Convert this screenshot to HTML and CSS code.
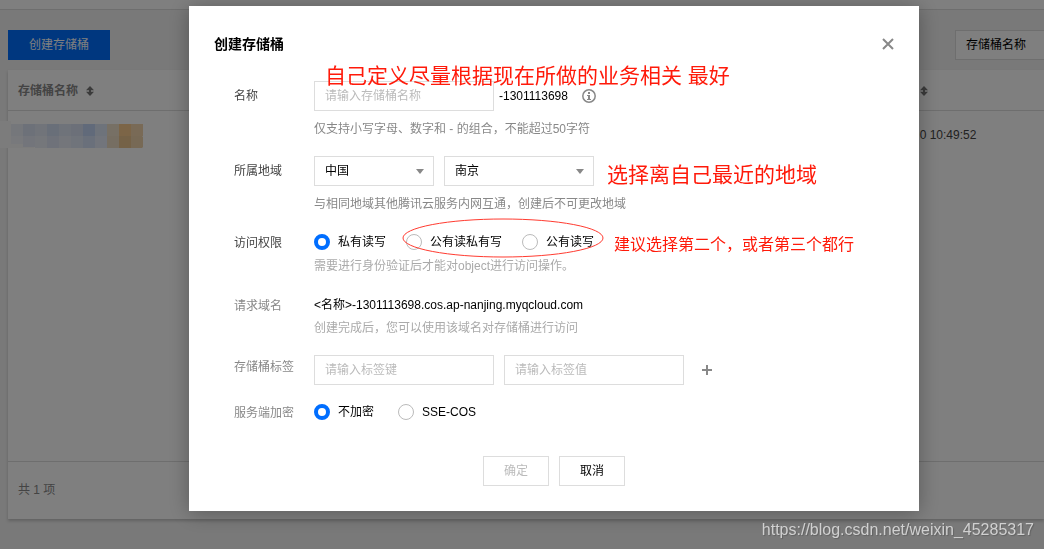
FILE: index.html
```html
<!DOCTYPE html>
<html lang="zh-CN">
<head>
<meta charset="utf-8">
<title>创建存储桶</title>
<link rel="stylesheet" href="styles.css">
</head>
<body>
<div class="page">
  <header class="topbar"></header>
  <main class="content">
    <div class="toolbar">
      <button class="btn btn-primary" type="button">创建存储桶</button>
      <button class="search-type" type="button">存储桶名称</button>
    </div>
    <section class="panel">
      <table class="buckets">
        <thead>
          <tr>
            <th class="col-name">存储桶名称
              <svg class="sort" viewBox="0 0 8 10" aria-hidden="true"><path d="M4 0 8 4.3H5V5.7H8L4 10 0 5.7H3V4.3H0Z"/></svg>
            </th>
            <th><svg class="sort" viewBox="0 0 8 10" aria-hidden="true"><path d="M4 0 8 4.3H5V5.7H8L4 10 0 5.7H3V4.3H0Z"/></svg></th>
          </tr>
        </thead>
        <tbody>
          <tr>
            <td class="col-name">
              <svg class="mosaic" viewBox="0 0 143 28" aria-hidden="true">
                <path d="M0 0H11V23H34V27H0Z" fill="#f8f8f8"/>
                <g>
                  <path d="M11 3H23V15H11Z" fill="#eaeef7"/><path d="M23 3H35V15H23Z" fill="#dbe3f2"/><path d="M35 3H47V15H35Z" fill="#e2e8f5"/><path d="M47 3H59V15H47Z" fill="#d2def3"/><path d="M59 3H71V15H59Z" fill="#dee6f5"/><path d="M71 3H83V15H71Z" fill="#d8e1f3"/><path d="M83 3H95V15H83Z" fill="#c2d4f5"/><path d="M95 3H107V15H95Z" fill="#dce6f7"/><path d="M107 3H119V15H107Z" fill="#efe0cb"/><path d="M119 3H131V15H119Z" fill="#f8ca8e"/><path d="M131 3H143V15H131Z" fill="#f2d5ac"/>
                  <path d="M11 15H23V23H11Z" fill="#f0f2f9"/><path d="M23 15H35V26H23Z" fill="#e6ebf6"/><path d="M35 15H47V27H35Z" fill="#ebeff7"/><path d="M47 15H59V27H47Z" fill="#dee5f4"/><path d="M59 15H71V27H59Z" fill="#e8edf7"/><path d="M71 15H83V27H71Z" fill="#e1e8f6"/><path d="M83 15H95V27H83Z" fill="#d5e1f6"/><path d="M95 15H107V27H95Z" fill="#e4ebf8"/><path d="M107 15H119V27H107Z" fill="#eddcc4"/><path d="M119 15H131V27H119Z" fill="#eac58f"/><path d="M131 15H142L143 16V26L142 27H131Z" fill="#eed3ab"/>
                </g>
              </svg>
            </td>
            <td>0 10:49:52</td>
          </tr>
        </tbody>
      </table>
      <footer class="panel-foot">共 1 项</footer>
    </section>
  </main>
</div>

<div class="overlay">
  <form class="dialog" role="dialog" aria-labelledby="dialog-title">
    <div class="dialog-head">
      <h1 id="dialog-title">创建存储桶</h1>
      <button class="icon-btn" type="button" aria-label="关闭">
        <svg width="12" height="12" viewBox="0 0 12 12"><path d="M1 1 11 11M11 1 1 11"/></svg>
      </button>
    </div>

    <div class="row">
      <label class="label" for="name">名称</label>
      <div class="field">
        <div class="line name-line">
          <input class="text" id="name" type="text" placeholder="请输入存储桶名称">
          <span>-1301113698</span>
          <svg class="info" width="14" height="14" viewBox="0 0 14 14" aria-hidden="true"><circle cx="7" cy="7" r="6.2"/><path d="M6 3H8V5H6ZM5 6H8V10H9V11H5V10H6V7H5Z"/></svg>
        </div>
        <p class="hint">仅支持小写字母、数字和 - 的组合，不能超过50字符</p>
      </div>
      <p class="note note-name">自己定义尽量根据现在所做的业务相关 最好</p>
    </div>

    <div class="row">
      <label class="label" for="country">所属地域</label>
      <div class="field">
        <div class="line">
          <select class="select select-country" id="country"><option>中国</option></select>
          <select class="select select-city" aria-label="城市"><option>南京</option></select>
        </div>
        <p class="hint">与相同地域其他腾讯云服务内网互通，创建后不可更改地域</p>
      </div>
      <p class="note note-region">选择离自己最近的地域</p>
    </div>

    <div class="row row-plain">
      <span class="label">访问权限</span>
      <div class="field">
        <div class="radios">
          <label><input type="radio" name="access" checked>私有读写</label>
          <label><input type="radio" name="access">公有读私有写</label>
          <label><input type="radio" name="access">公有读写</label>
        </div>
        <p class="hint light">需要进行身份验证后才能对object进行访问操作。</p>
      </div>
      <svg class="ring" width="202" height="40" viewBox="0 0 202 40" aria-hidden="true"><ellipse cx="101" cy="20" rx="100" ry="19"/></svg>
      <p class="note note-access">建议选择第二个，或者第三个都行</p>
    </div>

    <div class="row row-plain row-domain">
      <span class="label soft">请求域名</span>
      <div class="field">
        <p class="value">&lt;名称&gt;-1301113698.cos.ap-nanjing.myqcloud.com</p>
        <p class="hint light">创建完成后，您可以使用该域名对存储桶进行访问</p>
      </div>
    </div>

    <div class="row row-tags">
      <label class="label soft" for="tag-key">存储桶标签</label>
      <div class="field line">
        <input class="text" id="tag-key" type="text" placeholder="请输入标签键">
        <input class="text" type="text" placeholder="请输入标签值" aria-label="标签值">
        <button class="icon-btn add" type="button" aria-label="添加标签">
          <svg width="10" height="10" viewBox="0 0 10 10"><path d="M5 0V10M0 5H10"/></svg>
        </button>
      </div>
    </div>

    <div class="row row-plain">
      <span class="label soft">服务端加密</span>
      <div class="radios radios-wide">
        <label><input type="radio" name="sse" checked>不加密</label>
        <label><input type="radio" name="sse">SSE-COS</label>
      </div>
    </div>

    <div class="actions">
      <button class="btn" type="submit" disabled>确定</button>
      <button class="btn" type="button">取消</button>
    </div>
  </form>
</div>
<p class="watermark">https://blog.csdn.net/weixin_45285317</p>
</body>
</html>
```
FILE: styles.css
```css
* {
  box-sizing: border-box;
}

body {
  margin: 0;
  overflow: hidden;
  background: #f2f2f2;
  color: #000;
  font: 12px/18px "Liberation Sans", "Noto Sans CJK SC", sans-serif;
}

h1,
p {
  margin: 0;
}

button,
input,
select {
  font: inherit;
  color: inherit;
}

.page {
  min-height: 100vh;
  display: flex;
  flex-direction: column;
}

.topbar {
  height: 10px;
  background: #fff;
  border-bottom: 1px solid #ddd;
}

.content {
  flex: 1;
  display: flex;
  flex-direction: column;
  padding: 20px 0 30px 8px;
}

.toolbar {
  display: flex;
  justify-content: space-between;
  margin-bottom: 10px;
}

.btn {
  height: 30px;
  padding: 0 20px;
  border: 1px solid #ddd;
  background: #fff;
}

.btn:disabled {
  color: #bbb;
}

.btn-primary {
  border-color: #006eff;
  background: #006eff;
  color: #fff;
}

.search-type {
  width: 89px;
  height: 30px;
  padding: 0 10px;
  border: 1px solid #ddd;
  border-right: 0;
  background: #fff;
  text-align: left;
}

.panel {
  flex: 1;
  display: flex;
  flex-direction: column;
  background: #fff;
  box-shadow: 0 2px 3px rgba(0, 0, 0, 0.2);
}

.buckets {
  width: 100%;
  border-collapse: separate;
  border-spacing: 0;
}

.buckets th {
  height: 41px;
  padding: 2px 0 0;
  border-bottom: 1px solid #ddd;
  color: #888;
  text-align: left;
}

.buckets td {
  height: 48px;
  padding: 0;
  color: #444;
}

.buckets .col-name {
  width: 88%;
  padding-left: 10px;
}

.buckets td.col-name {
  padding-left: 0;
}

.sort {
  width: 8px;
  height: 10px;
  margin-left: 5px;
  fill: #777;
  vertical-align: -1px;
}

th:last-child .sort {
  margin-left: 0;
}

.mosaic {
  display: block;
  width: 143px;
  height: 28px;
  margin-left: -8px;
}

.panel-foot {
  margin-top: auto;
  padding: 19px 10px 20px;
  border-top: 1px solid #ddd;
  color: #888;
}

.overlay {
  position: fixed;
  inset: 0;
  display: flex;
  justify-content: center;
  align-items: flex-start;
  padding: 6px 0 0 64px;
  background: rgba(0, 0, 0, 0.5);
}

.dialog {
  width: 730px;
  padding: 25px;
  background: #fff;
  box-shadow: 0 2px 20px rgba(0, 0, 0, 0.3);
}

.dialog-head {
  display: flex;
  justify-content: space-between;
  align-items: center;
  height: 26px;
  margin-bottom: 24px;
}

.dialog-head h1 {
  font-size: 14px;
  line-height: 20px;
}

.icon-btn {
  display: flex;
  padding: 0;
  border: 0;
  background: none;
}

.icon-btn svg {
  fill: none;
  stroke: #888;
  stroke-width: 2;
}

.row {
  position: relative;
  display: grid;
  grid-template-columns: 80px 1fr;
  margin: 0 0 18px 20px;
}

.label {
  padding-top: 6px;
  color: #444;
}

.label.soft {
  color: #888;
}

.row-plain .label,
.row-tags .label {
  padding-top: 3px;
}

.line {
  display: flex;
  align-items: center;
  gap: 10px;
}

.name-line {
  gap: 5px;
}

.text {
  width: 180px;
  height: 30px;
  padding: 0 10px;
  border: 1px solid #ddd;
  background: #fff;
}

.text::placeholder {
  color: #bbb;
}

.info {
  margin-left: 9px;
  fill: #888;
}

.info circle {
  fill: none;
  stroke: #888;
  stroke-width: 1.5;
}

.hint {
  margin-top: 9px;
  color: #888;
}

.hint.light {
  margin-top: 4px;
  color: #aaa;
}

.row-domain .hint.light {
  margin-top: 3px;
}

.select {
  height: 30px;
  padding: 0 10px;
  border: 1px solid #ddd;
  border-radius: 0;
  appearance: none;
  background: #fff url("data:image/svg+xml,%3Csvg xmlns='http://www.w3.org/2000/svg' width='8' height='5'%3E%3Cpath d='M0 0H8L4 5Z' fill='%23888'/%3E%3C/svg%3E") no-repeat right 9px center;
}

.select-country {
  width: 120px;
}

.select-city {
  width: 150px;
}

.radios {
  display: flex;
  gap: 20px;
}

.radios-wide {
  gap: 24px;
}

.radios label {
  display: flex;
  align-items: center;
  height: 22px;
}

.radios input {
  width: 16px;
  height: 16px;
  margin: 0 8px 0 0;
  border: 1px solid #bbb;
  border-radius: 50%;
  appearance: none;
  background: #fff;
}

.radios input:checked {
  border: 4px solid #006eff;
}

.value {
  line-height: 22px;
}

.add {
  margin-left: 8px;
}

.row-domain {
  margin-top: 19px;
}

.row-tags {
  margin-bottom: 16px;
}

.actions {
  display: flex;
  justify-content: center;
  gap: 10px;
  margin-top: 33px;
}

.note {
  position: absolute;
  color: #ff1a0a;
  font-size: 21px;
  line-height: 30px;
  white-space: nowrap;
}

.note-name {
  left: 91px;
  top: -20px;
}

.note-region {
  left: 373px;
  top: 4px;
}

.note-access {
  left: 380px;
  top: -1px;
  font-size: 16px;
}

.ring {
  position: absolute;
  left: 168px;
  top: -13px;
  fill: none;
  stroke: #ff3b30;
}

.watermark {
  position: fixed;
  right: 10px;
  bottom: 8px;
  color: #d0d0d0;
  font-size: 16px;
  line-height: 22px;
  text-shadow: 1px 1px 1px rgba(0, 0, 0, 0.2);
}
```
